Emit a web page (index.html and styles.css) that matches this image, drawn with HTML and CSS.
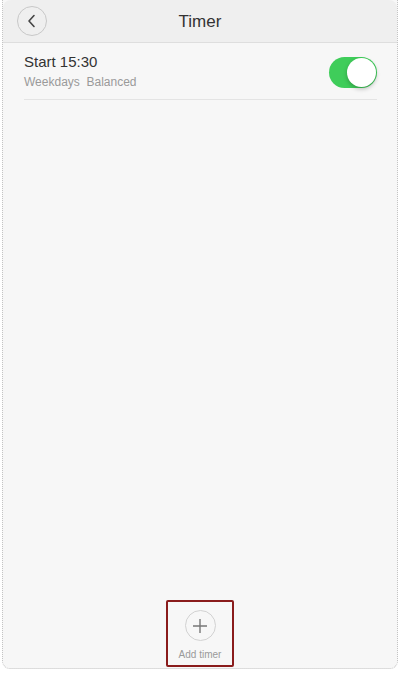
FILE: index.html
```html
<!DOCTYPE html>
<html lang="en">
<head>
  <meta charset="UTF-8" />
  <meta name="viewport" content="width=device-width, initial-scale=1" />
  <title>Timer</title>
  <link rel="stylesheet" href="styles.css">
</head>
<body>
  <div class="screen">
    <div class="header">
      <button class="back-btn" aria-label="Back">
        <svg width="10" height="14" viewBox="0 0 10 14"><path d="M7 1.5 L2 7 L7 12.5" fill="none" stroke="#444" stroke-width="1.6" stroke-linecap="round" stroke-linejoin="round"/></svg>
      </button>
      <h1 class="title">Timer</h1>
    </div>

    <div class="timer-list">
      <div class="timer-row">
        <div class="timer-info">
          <div class="timer-name">Start 15:30</div>
          <div class="timer-meta">Weekdays&nbsp;&nbsp;Balanced</div>
        </div>
        <div class="switch on"><span class="knob"></span></div>
      </div>
    </div>

    <div class="footer">
      <div class="add-btn">
        <span class="plus-circle">
          <svg width="16" height="16" viewBox="0 0 16 16"><path d="M8 1 V15 M1 8 H15" stroke="#777" stroke-width="1.4"/></svg>
        </span>
        <span class="add-label">Add timer</span>
      </div>
    </div>
  </div>
</body>
</html>
```

FILE: styles.css
```css
html, body { margin: 0; height: 100%; background: #fff; }
body { font-family: "Helvetica Neue", "Liberation Sans", Arial, sans-serif; padding: 0 2px 4px 2px; box-sizing: border-box; }
.screen { height: 669px; background: #f7f7f7; border: 1px dotted #c4c4c4; border-top: none; border-radius: 0 0 8px 8px; display: flex; flex-direction: column; box-sizing: border-box; }

.header { height: 42px; background: #efefef; border-bottom: 1px solid #dedede; border-radius: 8px 8px 0 0; position: relative; display: flex; align-items: center; justify-content: center; }
.title { margin: 2px 0 0; font-size: 17px; font-weight: normal; color: #333; }
.back-btn { position: absolute; left: 14px; top: 6px; width: 30px; height: 30px; border-radius: 50%; border: 1px solid #c8c8c8; background: transparent; padding: 0; display: flex; align-items: center; justify-content: center; }

.timer-list { padding: 0 20px 0 21px; }
.timer-row { display: flex; align-items: center; justify-content: space-between; height: 56px; border-bottom: 1px solid #e4e4e4; }
.timer-name { font-size: 15px; color: #333; }
.timer-meta { font-size: 12px; color: #9a9a9a; margin-top: 5px; }

.switch { width: 48px; height: 31px; border-radius: 16px; background: #dcdcdc; position: relative; margin-top: 2px; }
.switch.on { background: #3fcd5a; }
.knob { position: absolute; top: 1px; right: 1px; width: 29px; height: 29px; border-radius: 50%; background: #fff; box-shadow: 0 2px 4px rgba(0,0,0,0.25); }

.footer { margin-top: auto; display: flex; justify-content: center; padding-bottom: 1px; }
.add-btn { width: 64px; height: 63px; border: 2px solid #8a1c1c; border-radius: 2px; display: flex; flex-direction: column; align-items: center; }
.plus-circle { width: 29px; height: 29px; margin-top: 8px; border-radius: 50%; border: 1px solid #d2d2d2; display: flex; align-items: center; justify-content: center; }
.add-label { font-size: 10px; color: #9a9a9a; margin-top: 8px; }
```
